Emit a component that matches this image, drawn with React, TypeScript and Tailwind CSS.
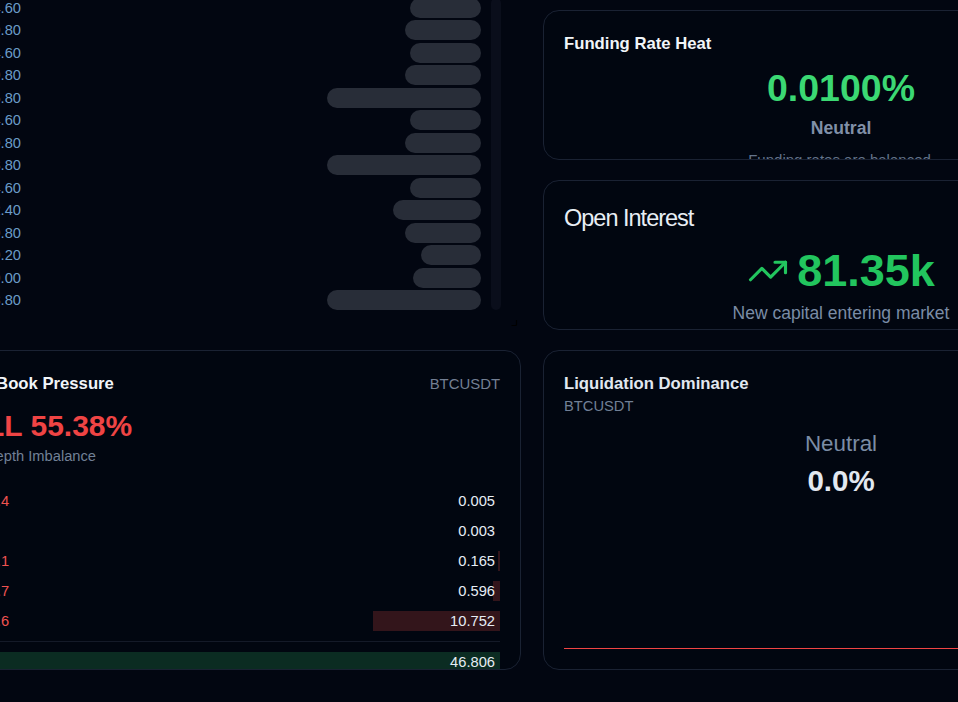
import { TrendingUp } from "lucide-react";

const levels: [string, number][] = [
  ["94,104.60", 71], ["94,109.80", 76], ["94,104.60", 71], ["94,109.80", 76], ["94,105.80", 154],
  ["94,104.60", 71], ["94,109.80", 76], ["94,108.80", 154], ["94,104.60", 71], ["94,102.40", 88],
  ["94,109.80", 76], ["94,109.20", 60], ["94,109.00", 68], ["94,108.80", 154],
];

const asks: [string, string, number][] = [
  ["77,123.4", "0.005", 0],
  ["77,123", "0.003", 0],
  ["77,122.1", "0.165", 2],
  ["77,120.7", "0.596", 7],
  ["77,120.6", "10.752", 127],
];

function Card({ className, children }: { className: string; children: React.ReactNode }) {
  return (
    <div className={`overflow-hidden rounded-2xl border border-[#1a2233] bg-[#010610] px-5 pt-5 ${className}`}>
      {children}
    </div>
  );
}

export default function App() {
  return (
    <div className="h-[702px] w-[958px] overflow-hidden bg-[#020611] pt-[10px] font-['Liberation_Sans',Arial,sans-serif]">
      <div className="-ml-[75px] grid w-[1214px] grid-cols-[596px_596px] gap-x-[22px] gap-y-[20px]">
        <div className="relative -mt-[20px] flex h-[340px] gap-[10px] pt-[7.5px] pr-5 pb-5 pl-[21px]">
          <div className="flex flex-1 flex-col">
            {levels.map(([price, width], i) => (
              <div key={i} className="flex h-[22.5px] shrink-0 items-start justify-between">
                <span className="w-[75px] text-right text-[14.7px] leading-5 whitespace-nowrap text-[#6b9cc8]">{price}</span>
                <div className="h-5 rounded-full bg-[#282d38]" style={{ width }} />
              </div>
            ))}
          </div>
          <div className="w-[10px] rounded-full bg-[#0a0e1b]" />
          <svg className="absolute right-[3px] bottom-[3px]" width="8" height="8" viewBox="0 0 8 8" fill="none" stroke="#000" strokeWidth="1.2">
            <path d="M6.5 1v4.5a1 1 0 0 1-1 1H1.5" />
          </svg>
        </div>

        <div className="flex h-[320px] flex-col gap-5">
          <Card className="h-[150px]">
            <div className="mt-px text-[16.7px] leading-6 font-bold text-[#f1f5f9]">Funding Rate Heat</div>
            <div className="flex flex-col items-center">
              <div className="mt-[4px] text-[37.5px] leading-[56px] font-bold text-[#3bd873]">0.0100%</div>
              <div className="text-[17.6px] leading-6 font-bold text-[#8090a8]">Neutral</div>
              <div className="mt-[10px] mr-[3px] text-[15px] leading-5 text-[#64748b]">Funding rates are balanced</div>
            </div>
          </Card>
          <Card className="h-[150px]">
            <div className="mt-px text-[23.5px] leading-8 tracking-[-1px] text-[#e8eef5]">Open Interest</div>
            <div className="flex flex-col items-center">
              <div className="mt-[12px] flex h-[50px] items-center gap-2 text-[45px] font-bold text-[#22c55e]">
                <TrendingUp size={42} strokeWidth={1.8} />
                <span>81.35k</span>
              </div>
              <div className="mt-[5px] text-[17.5px] leading-6 text-[#7a8ca6]">New capital entering market</div>
            </div>
          </Card>
        </div>

        <Card className="h-[320px]">
          <div className="mt-px flex items-center justify-between">
            <div className="text-[16.7px] leading-6 font-bold text-[#f1f5f9]">Order Book Pressure</div>
            <div className="text-[14.9px] text-[#737f93]">BTCUSDT</div>
          </div>
          <div className="mt-[6px] text-[30px] leading-[48px] font-bold text-[#ef4444]">SELL 55.38%</div>
          <div className="-mt-[4px] ml-[39px] text-[14.7px] leading-5 text-[#718096]">Depth Imbalance</div>
          <div className="mt-[25px] flex flex-col gap-[10px]">
            {asks.map(([price, size, bar]) => (
              <div key={price} className="relative flex h-5 items-center justify-between pr-[5px] pl-[6px] text-[14.7px]">
                <div className="absolute top-0 right-0 bottom-0 bg-[#33151b]" style={{ width: bar }} />
                <span className="relative text-[#ef5350]">{price}</span>
                <span className="relative text-[#e6ecf4]">{size}</span>
              </div>
            ))}
          </div>
          <div className="mt-[10px] h-px bg-[#141a28]" />
          <div className="mt-[10px] flex h-5 items-center justify-between bg-[#0b2c22] pr-[5px] pl-[6px] text-[14.7px]">
            <span className="text-[#22c55e]">77,118</span>
            <span className="text-[#e6ecf4]">46.806</span>
          </div>
        </Card>

        <Card className="h-[320px]">
          <div className="mt-px text-[16.7px] leading-6 font-bold text-[#e2e8f0]">Liquidation Dominance</div>
          <div className="text-[14.7px] leading-5 text-[#718096]">BTCUSDT</div>
          <div className="mt-[12px] flex flex-col items-center">
            <div className="text-[22.4px] leading-8 text-[#7b8ca5]">Neutral</div>
            <div className="mt-[3px] text-[29.5px] leading-9 font-bold text-[#e2e8f0]">0.0%</div>
          </div>
          <div className="mt-[149px] h-px bg-[#ef4444]" />
        </Card>
      </div>
    </div>
  );
}
